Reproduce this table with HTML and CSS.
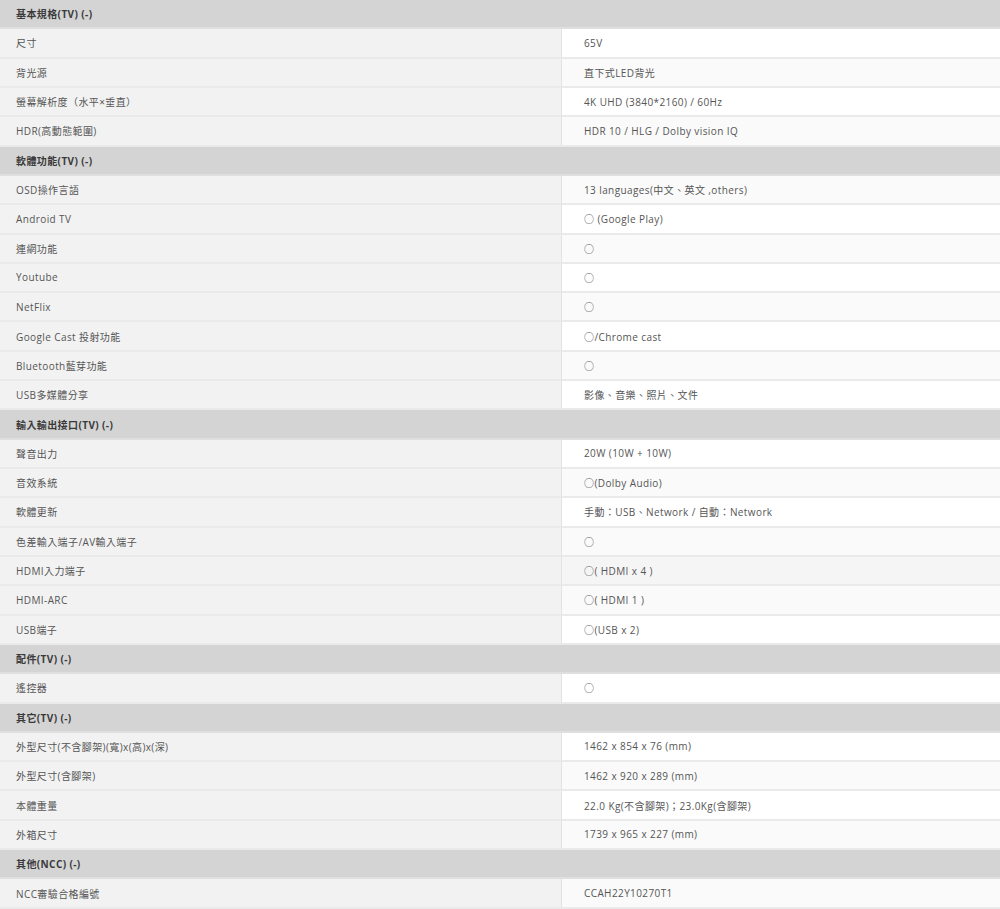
FILE: index.html
```html
<!DOCTYPE html>
<html lang="zh-Hant">
<head>
<meta charset="utf-8">
<title>規格</title>
<link rel="stylesheet" href="styles.css">
</head>
<body>
<div class="spec">
  <div class="head">基本規格(TV) (-)</div>
  <div class="k">尺寸</div><div class="v">65V</div>
  <div class="k">背光源</div><div class="v alt">直下式LED背光</div>
  <div class="k">螢幕解析度（水平×垂直）</div><div class="v">4K UHD (3840*2160) / 60Hz</div>
  <div class="k">HDR(高動態範圍)</div><div class="v alt">HDR 10 / HLG / Dolby vision IQ</div>

  <div class="head">軟體功能(TV) (-)</div>
  <div class="k">OSD操作言語</div><div class="v alt">13 languages(中文、英文 ,others)</div>
  <div class="k">Android TV</div><div class="v">○ (Google Play)</div>
  <div class="k">連網功能</div><div class="v alt">○</div>
  <div class="k">Youtube</div><div class="v">○</div>
  <div class="k">NetFlix</div><div class="v alt">○</div>
  <div class="k">Google Cast 投射功能</div><div class="v">○/Chrome cast</div>
  <div class="k">Bluetooth藍芽功能</div><div class="v alt">○</div>
  <div class="k">USB多媒體分享</div><div class="v">影像、音樂、照片、文件</div>

  <div class="head">輸入輸出接口(TV) (-)</div>
  <div class="k">聲音出力</div><div class="v">20W (10W + 10W)</div>
  <div class="k">音效系統</div><div class="v alt">○(Dolby Audio)</div>
  <div class="k">軟體更新</div><div class="v">手動：USB、Network / 自動：Network</div>
  <div class="k">色差輸入端子/AV輸入端子</div><div class="v alt">○</div>
  <div class="k">HDMI入力端子</div><div class="v alt2">○( HDMI x 4 )</div>
  <div class="k">HDMI-ARC</div><div class="v alt">○( HDMI 1 )</div>
  <div class="k">USB端子</div><div class="v">○(USB x 2)</div>

  <div class="head">配件(TV) (-)</div>
  <div class="k">遙控器</div><div class="v">○</div>

  <div class="head">其它(TV) (-)</div>
  <div class="k">外型尺寸(不含腳架)(寬)x(高)x(深)</div><div class="v">1462 x 854 x 76 (mm)</div>
  <div class="k">外型尺寸(含腳架)</div><div class="v alt">1462 x 920 x 289 (mm)</div>
  <div class="k">本體重量</div><div class="v">22.0 Kg(不含腳架)；23.0Kg(含腳架)</div>
  <div class="k">外箱尺寸</div><div class="v alt">1739 x 965 x 227 (mm)</div>

  <div class="head">其他(NCC) (-)</div>
  <div class="k">NCC審驗合格編號</div><div class="v alt">CCAH22Y10270T1</div>
</div>
</body>
</html>
```

FILE: styles.css
```css
html, body {
  margin: 0;
  padding: 0;
  background: #ffffff;
}

body {
  font-family: "Open Sans", "Noto Sans CJK TC", sans-serif;
  font-size: 10px;
  color: #555555;
}

.spec {
  display: grid;
  grid-template-columns: 562px 1fr;
  grid-auto-rows: 29.32px;
  width: 1000px;
}

.spec > div {
  box-sizing: border-box;
  display: flex;
  align-items: center;
  border-bottom: 2px solid #eaeaea;
  white-space: nowrap;
  letter-spacing: 0.4px;
}

.head {
  grid-column: 1 / span 2;
  background: #d4d4d4;
  border-bottom-color: #dfdfdf !important;
  padding-left: 16px;
  font-weight: bold;
  color: #3a3a3a;
}

.k {
  background: #f2f2f2;
  padding-left: 16px;
  border-right: 1px solid #e3e3e3;
}

.v {
  background: #ffffff;
  padding-left: 22px;
}

.v.alt {
  background: #fafafa;
}

.v.alt2 {
  background: #f5f5f5;
}
```
